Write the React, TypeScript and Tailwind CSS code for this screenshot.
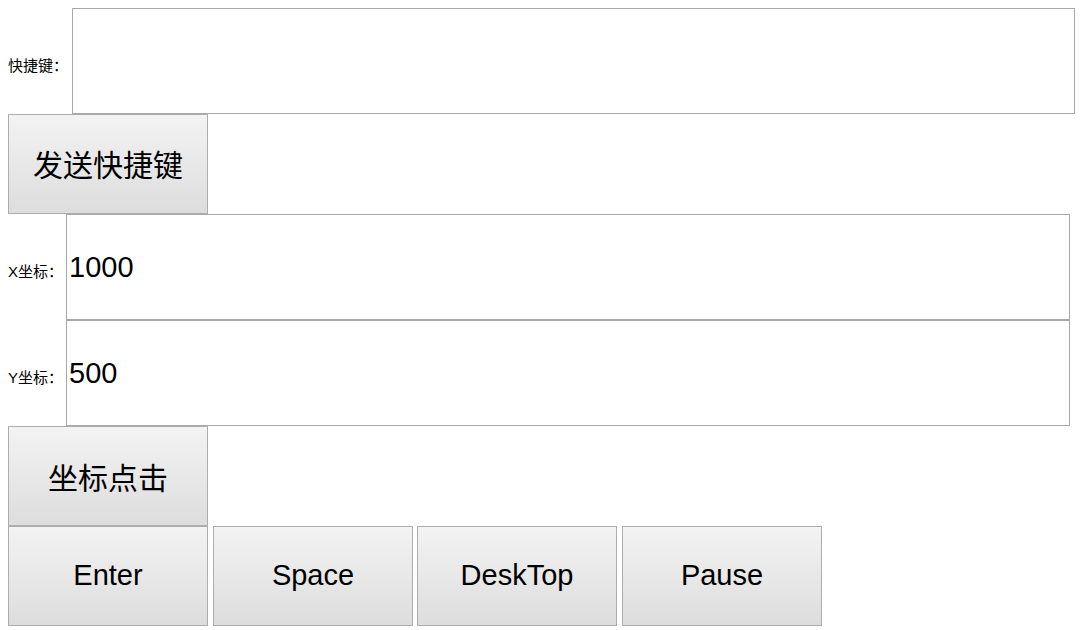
import React, { useState } from "react";

const btn =
  "w-[200px] h-[100px] shrink-0 border border-[#adadad] bg-gradient-to-b from-[#f3f3f3] to-[#dddddd] text-black flex items-center justify-center";
const field =
  "h-[106px] w-[1004px] border border-[#a9a9a9] bg-white pl-[2px] text-[29px] text-black outline-none";
const label = "text-[15px] text-black pt-[10px] shrink-0 whitespace-nowrap";

export default function App() {
  const [keys, setKeys] = useState("");
  const [x, setX] = useState("1000");
  const [y, setY] = useState("500");

  return (
    <div
      className="min-h-screen bg-white p-[8px]"
      style={{ fontFamily: '"Liberation Sans", "Noto Sans CJK SC", sans-serif' }}
    >
      <div className="flex items-center">
        <span className={`${label} w-[64px]`}>快捷键：</span>
        <input className={field} value={keys} onChange={(e) => setKeys(e.target.value)} />
      </div>

      <button className={`${btn} text-[30px] pt-[2px]`}>发送快捷键</button>

      <div className="flex items-center">
        <span className={`${label} w-[58px]`}>X坐标：</span>
        <input className={field} value={x} onChange={(e) => setX(e.target.value)} />
      </div>
      <div className="flex items-center">
        <span className={`${label} w-[58px]`}>Y坐标：</span>
        <input className={field} value={y} onChange={(e) => setY(e.target.value)} />
      </div>

      <button className={`${btn} text-[30px] pt-[4px]`}>坐标点击</button>

      <div className="flex">
        <button className={`${btn} text-[29px]`}>Enter</button>
        <button className={`${btn} text-[29px] ml-[5px]`}>Space</button>
        <button className={`${btn} text-[29px] ml-[4px]`}>DeskTop</button>
        <button className={`${btn} text-[29px] ml-[5px]`}>Pause</button>
      </div>
    </div>
  );
}
